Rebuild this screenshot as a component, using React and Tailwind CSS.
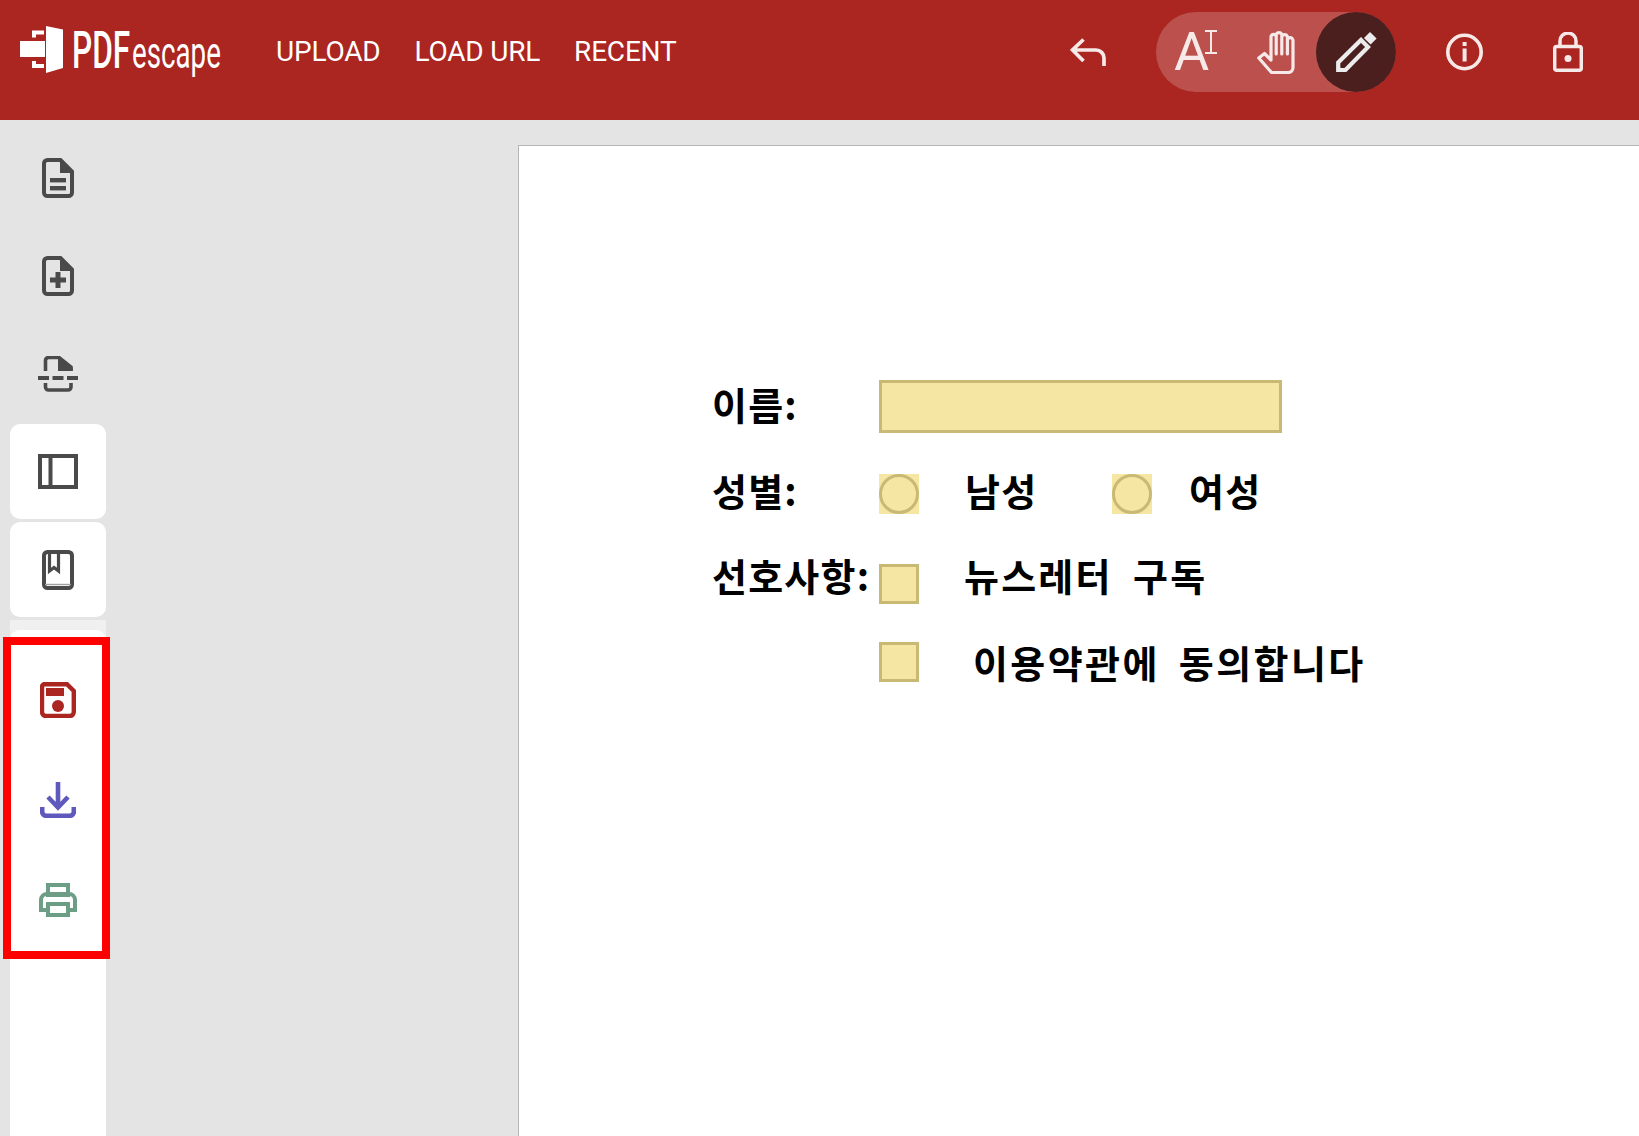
const DARK = "#4a4a4a";

function Logo() {
  return (
    <svg width="205" height="56" viewBox="0 0 205 56" className="ml-[20px] shrink-0" style={{ fontFamily: "Roboto, sans-serif" }}>
      <rect x="0" y="17" width="25" height="16" fill="#fff" />
      <path d="M12 6.5h12v4h-8v3h-4zM12 37h4v3h8v4H12z" fill="#fff" />
      <path d="M26 2L43 5.5V44L26 49Z" fill="#fff" />
      <text transform="translate(52 44) scale(0.62 1)" fontSize="51" fontWeight="500" fill="#fff">PDF</text>
      <text transform="translate(112 44) scale(0.63 1)" fontSize="44" fontWeight="400" fill="#fff">escape</text>
    </svg>
  );
}

function Undo() {
  return (
    <svg width="36" height="28" viewBox="0 0 36 28" fill="none" stroke="#f7e9e8" strokeWidth="3.7">
      <path d="M13.5 1.5L2.5 12L13.5 23M2.5 12H26a8 8 0 0 1 8 8V28" />
    </svg>
  );
}

function Hand() {
  return (
    <svg width="38" height="44" viewBox="0 0 38 44" fill="none" stroke="#f7e9e8" strokeWidth="3.2" strokeLinejoin="round" strokeLinecap="round">
      <path d="M14 30L7.5 23.5L1.8 28L14.5 42.5H31a5 5 0 0 0 5-5V10.5a2.8 2.8 0 0 0-5.6 0V24M30.4 24V6.5a3 3 0 0 0-5.6 0V24M24.8 24V4.5a3 3 0 0 0-5.6 0V24M19.2 24V7a2.6 2.6 0 0 0-5.2 0V30" />
    </svg>
  );
}

function Pencil() {
  return (
    <svg width="41" height="41" viewBox="0 0 41 41" fill="none" stroke="#ececec">
      <path d="M28 6L34 0L40.6 6.6L34.6 12.6Z" fill="#ececec" stroke="none" />
      <path d="M2.2 30.5L25 8L32 15L9.5 38H2.2Z" strokeWidth="4.2" />
      <path d="M2 33V39.5H8Z" fill="#ececec" stroke="none" />
    </svg>
  );
}

function Info() {
  return (
    <svg width="37" height="38" viewBox="0 0 37 38" fill="none" stroke="#f7e9e8">
      <circle cx="18.5" cy="19" r="16.7" strokeWidth="3.6" />
      <rect x="16.6" y="9" width="4" height="4" fill="#f7e9e8" stroke="none" />
      <rect x="16.6" y="15.5" width="4" height="13" fill="#f7e9e8" stroke="none" />
    </svg>
  );
}

function Lock() {
  return (
    <svg width="30" height="40" viewBox="0 0 30 40" fill="none" stroke="#f7e9e8" strokeWidth="3.5">
      <rect x="1.7" y="14.5" width="26.6" height="23.8" rx="2" />
      <path d="M7 14V9a8 8 0 0 1 16 0V14" />
      <circle cx="15" cy="26.5" r="3.5" fill="#f7e9e8" stroke="none" />
    </svg>
  );
}

function DocIcon({ children }) {
  return (
    <svg width="32" height="40" viewBox="0 0 32 40" fill="none" stroke={DARK} strokeWidth="4">
      <path d="M5.5 2H18.5L30 13.5V34.5a3.5 3.5 0 0 1-3.5 3.5H5.5A3.5 3.5 0 0 1 2 34.5V5.5A3.5 3.5 0 0 1 5.5 2Z" />
      <path d="M18 2L31 15H18Z" fill={DARK} stroke="none" />
      {children}
    </svg>
  );
}

function DocLines() {
  return (
    <DocIcon>
      <rect x="8" y="20" width="16" height="4.4" fill={DARK} stroke="none" />
      <rect x="8" y="28" width="16" height="4.4" fill={DARK} stroke="none" />
    </DocIcon>
  );
}

function DocPlus() {
  return (
    <DocIcon>
      <rect x="8" y="21.5" width="16" height="5" fill={DARK} stroke="none" />
      <rect x="13.5" y="16" width="5" height="16" fill={DARK} stroke="none" />
    </DocIcon>
  );
}

function DocScan() {
  return (
    <svg width="40" height="36" viewBox="0 0 40 36" fill="none" stroke={DARK} strokeWidth="3.6">
      <path d="M7.5 15V4.5a3 3 0 0 1 3-3H21L33 11V15" />
      <path d="M20 2L34.8 12V15H20Z" fill={DARK} stroke="none" />
      <rect x="0" y="20" width="11" height="4" fill={DARK} stroke="none" />
      <rect x="14.5" y="20" width="11" height="4" fill={DARK} stroke="none" />
      <rect x="29" y="20" width="11" height="4" fill={DARK} stroke="none" />
      <path d="M7.5 27V31a3 3 0 0 0 3 3H30a3 3 0 0 0 3-3V27" />
    </svg>
  );
}

function PanelIcon() {
  return (
    <svg width="40" height="35" viewBox="0 0 40 35" fill="none" stroke={DARK} strokeWidth="4">
      <rect x="2" y="2" width="36" height="31" />
      <path d="M12.5 2V33" />
    </svg>
  );
}

function BookIcon() {
  return (
    <svg width="32" height="40" viewBox="0 0 32 40" fill="none" stroke={DARK}>
      <rect x="2" y="2" width="28" height="36" rx="3.5" strokeWidth="4" />
      <path d="M7.5 2V21L12 17.5L16.5 21V2" strokeWidth="3.2" />
      <path d="M3 34.5H29" strokeWidth="1.4" stroke="#a0a0a0" />
    </svg>
  );
}

function SaveIcon() {
  const c = "#ab2521";
  return (
    <svg width="36" height="36" viewBox="0 0 36 36" fill="none" stroke={c} strokeWidth="4.4">
      <path d="M5 2.2H27L33.8 9V30a4 4 0 0 1-4 4H6a4 4 0 0 1-4-4V5a3 3 0 0 1 3-3Z" />
      <rect x="6" y="6" width="18" height="8" fill={c} stroke="none" />
      <circle cx="18" cy="24" r="6" fill={c} stroke="none" />
    </svg>
  );
}

function DownloadIcon() {
  return (
    <svg width="36" height="36" viewBox="0 0 36 36" fill="none" stroke="#5f58bd" strokeWidth="4.6">
      <path d="M18 0V26M8 15L18 25.5L28 15" />
      <path d="M2.2 25V29.8a4 4 0 0 0 4 4H29.8a4 4 0 0 0 4-4V25" />
    </svg>
  );
}

function PrinterIcon() {
  return (
    <svg width="38" height="34" viewBox="0 0 38 34" fill="none" stroke="#6b9e85" strokeWidth="4">
      <rect x="9" y="2" width="20" height="10" />
      <path d="M9 27H2V17a6 6 0 0 1 6-6H30a6 6 0 0 1 6 6V27H29" />
      <rect x="9" y="21" width="20" height="11" />
    </svg>
  );
}

function ToolRow({ children, card }) {
  return (
    <div className={"flex h-[95px] mb-[3px] items-center justify-center " + (card ? "bg-white rounded-[10px]" : "")}>
      {children}
    </div>
  );
}

function Radio() {
  return (
    <div className="w-[40px] h-[40px] bg-[#f6e6a4] shrink-0">
      <div className="w-full h-full rounded-full border-[3px] border-[#c8b974]" />
    </div>
  );
}

function Check() {
  return <div className="w-[40px] h-[40px] bg-[#f6e6a4] border-[3px] border-[#c8b974] shrink-0" />;
}

export default function App() {
  return (
    <div className="relative flex flex-col h-screen overflow-hidden bg-[#e4e4e4]" style={{ fontFamily: "Roboto, sans-serif" }}>
      <header className="h-[120px] shrink-0 bg-[#ab2521] flex items-center pb-[16px] text-white">
        <Logo />
        <nav className="flex items-center gap-[34px] ml-[51px] text-[28px] leading-none font-['Roboto'] tracking-[-0.2px]">
          <span>UPLOAD</span>
          <span>LOAD URL</span>
          <span>RECENT</span>
        </nav>
        <div className="ml-auto flex items-center pr-[56px]">
          <Undo />
          <div className="ml-[50px] flex items-center w-[240px] h-[80px] rounded-full bg-white/20">
            <div className="flex items-start ml-[18px] w-[58px] h-[44px] text-[#f7e9e8]">
              <span className="text-[54px] leading-[44px] font-normal">A</span>
              <svg width="14" height="24" viewBox="0 0 14 24" fill="none" stroke="#f7e9e8" strokeWidth="2" className="-ml-[5px] shrink-0">
                <path d="M1 1H13M1 23H13M7 1V23" />
              </svg>
            </div>
            <div className="ml-[25px]"><Hand /></div>
            <div className="ml-auto w-[80px] h-[80px] rounded-full bg-[#4a1f1e] flex items-center justify-center">
              <Pencil />
            </div>
          </div>
          <div className="ml-[50px]"><Info /></div>
          <div className="ml-[70px]"><Lock /></div>
        </div>
      </header>

      <div className="flex flex-1 min-h-0">
        <aside className="ml-[10px] w-[96px] shrink-0 flex flex-col pt-[10px]">
          <ToolRow><DocLines /></ToolRow>
          <ToolRow><DocPlus /></ToolRow>
          <ToolRow><DocScan /></ToolRow>
          <ToolRow card><PanelIcon /></ToolRow>
          <ToolRow card><BookIcon /></ToolRow>
          <div className="flex-1 bg-[#f0f0f0] pt-[10px] flex flex-col">
            <div className="flex-1 bg-white rounded-t-[10px] pt-[20px]">
              <div className="h-[100px] flex items-center justify-center"><SaveIcon /></div>
              <div className="h-[100px] flex items-center justify-center"><DownloadIcon /></div>
              <div className="h-[100px] flex items-center justify-center"><PrinterIcon /></div>
            </div>
          </div>
        </aside>

        <main className="flex-1 min-w-0 pl-[412px] pt-[25px] flex">
          <div
            className="flex-1 bg-white border-t border-l border-[#b5b5b5] pl-[193px] pt-[234px] font-bold text-black text-[38px] leading-none tracking-[1.2px]"
            style={{ fontFamily: '"Noto Sans CJK KR", sans-serif' }}
          >
            <div className="flex items-center h-[53px]">
              <span className="w-[167px] mb-[6px]">이름:</span>
              <div className="w-[403px] h-[53px] bg-[#f6e6a4] border-[3px] border-[#c8b974]" />
            </div>
            <div className="flex items-center h-[40px] mt-[41px]">
              <span className="w-[167px] mb-[9px]">성별:</span>
              <Radio />
              <span className="w-[193px] pl-[46px] mb-[9px]">남성</span>
              <Radio />
              <span className="pl-[37px] mb-[9px]">여성</span>
            </div>
            <div className="flex items-center h-[40px] mt-[50px]">
              <span className="w-[167px] mb-[18px] whitespace-nowrap">선호사항:</span>
              <Check />
              <span className="pl-[45px] mb-[18px] whitespace-nowrap tracking-[2.2px] [word-spacing:9.5px]">뉴스레터 구독</span>
            </div>
            <div className="flex items-center h-[40px] mt-[38px]">
              <span className="w-[167px]" />
              <Check />
              <span className="pl-[54px] mb-[1px] whitespace-nowrap tracking-[2.4px] [word-spacing:8px]">이용약관에 동의합니다</span>
            </div>
          </div>
        </main>
      </div>

      <div className="absolute left-[3px] top-[637px] w-[107px] h-[322px] border-[8px] border-[#ff0000]" />
    </div>
  );
}
